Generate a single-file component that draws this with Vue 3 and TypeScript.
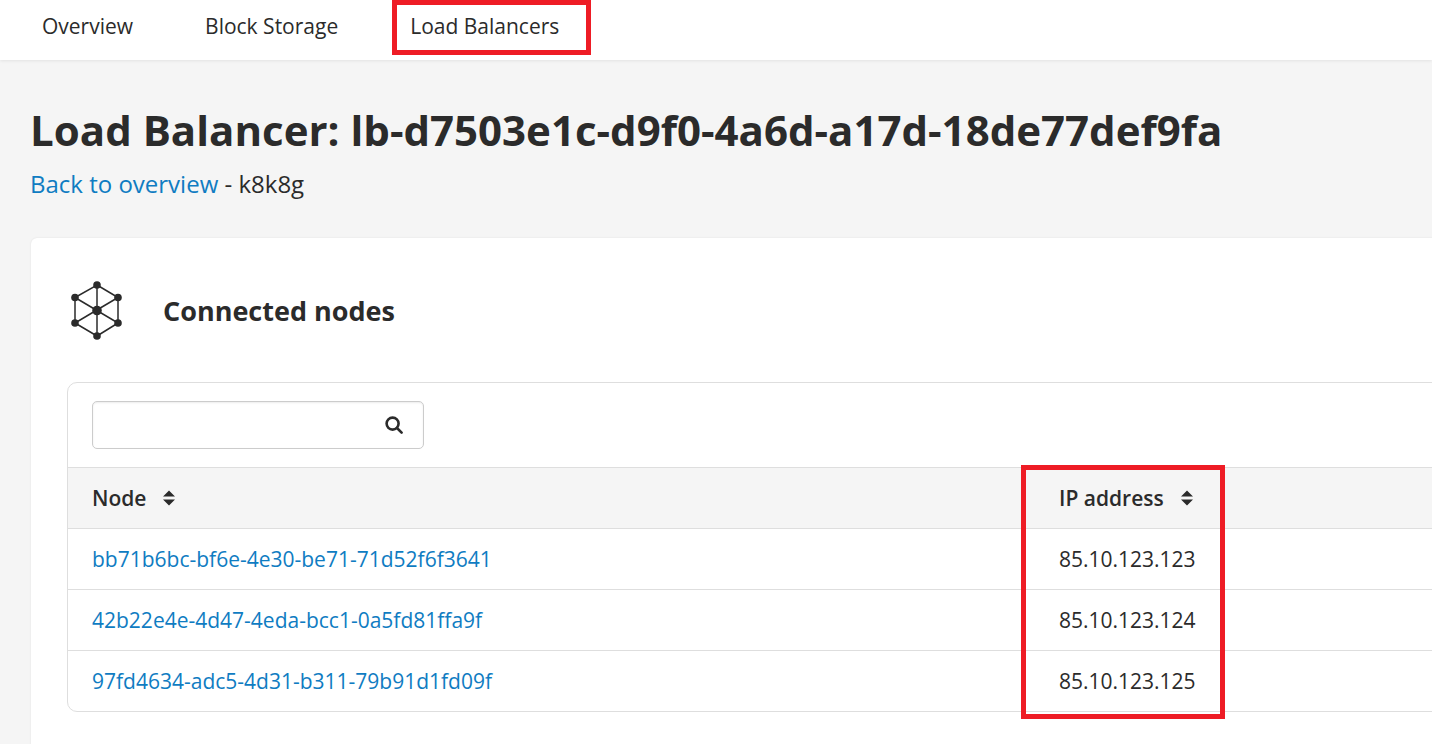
<script setup lang="ts">
const tabs: string[] = ['Overview', 'Block Storage', 'Load Balancers']
const rows = [
  { id: 'bb71b6bc-bf6e-4e30-be71-71d52f6f3641', ip: '85.10.123.123' },
  { id: '42b22e4e-4d47-4eda-bcc1-0a5fd81ffa9f', ip: '85.10.123.124' },
  { id: '97fd4634-adc5-4d31-b311-79b91d1fd09f', ip: '85.10.123.125' },
]
const nodes: [number, number][] = [[97, 285], [118, 297.5], [118, 323], [97, 336], [75, 323], [75, 297.5]]
</script>

<template>
  <div class="page">
    <nav class="nav">
      <a v-for="t in tabs" :key="t" class="tab">{{ t }}</a>
    </nav>
    <main class="main">
      <h1 class="title">Load Balancer: lb-d7503e1c-d9f0-4a6d-a17d-18de77def9fa</h1>
      <p class="sub"><a class="link">Back to overview</a> - k8k8g</p>
      <section class="card">
        <header class="card-head">
          <svg class="cube" width="54" height="60" viewBox="70 281 54 60">
            <g stroke="#2b2b2b" stroke-width="1.5" fill="none">
              <polygon points="97,285 118,297.5 118,323 97,336 75,323 75,297.5" />
              <line x1="97" y1="285" x2="97" y2="336" />
              <line x1="75" y1="297.5" x2="118" y2="323" />
              <line x1="118" y1="297.5" x2="75" y2="323" />
            </g>
            <circle v-for="(n, i) in nodes" :key="i" :cx="n[0]" :cy="n[1]" r="3.8" fill="#2b2b2b" />
            <circle cx="97" cy="310.5" r="4.8" fill="#2b2b2b" />
          </svg>
          <h2 class="card-title">Connected nodes</h2>
        </header>
        <div class="table-box">
          <div class="toolbar">
            <div class="search">
              <svg width="18" height="18" viewBox="0 0 18 18" fill="none" stroke="#2b2b2b" stroke-width="2.6">
                <circle cx="7.6" cy="7.6" r="6" />
                <line x1="12" y1="12" x2="16.6" y2="16.6" stroke-linecap="round" />
              </svg>
            </div>
          </div>
          <div class="row head">
            <div class="cell node">Node
              <svg class="sort" width="12" height="16" viewBox="0 0 12 16" fill="#2b2b2b"><path d="M6 0.5 12 6.6H0Z M0 9.4H12L6 15.5Z" /></svg>
            </div>
            <div class="cell ip">IP address
              <svg class="sort" width="12" height="16" viewBox="0 0 12 16" fill="#2b2b2b"><path d="M6 0.5 12 6.6H0Z M0 9.4H12L6 15.5Z" /></svg>
            </div>
          </div>
          <div v-for="r in rows" :key="r.id" class="row">
            <div class="cell node"><a class="link">{{ r.id }}</a></div>
            <div class="cell ip">{{ r.ip }}</div>
          </div>
        </div>
      </section>
    </main>
    <div class="mark mark-tab"></div>
    <div class="mark mark-col"></div>
  </div>
</template>

<style>
html, body { margin: 0; background: #f5f5f5; overflow: hidden; }
</style>

<style scoped>
.page {
  position: relative;
  width: 1432px;
  height: 744px;
  overflow: hidden;
  background: #f5f5f5;
  color: #2b2b2b;
  font-family: "Open Sans", sans-serif;
}
.nav {
  height: 60px;
  box-sizing: border-box;
  padding-left: 42px;
  display: flex;
  align-items: center;
  gap: 72px;
  background: #fff;
  box-shadow: 0 1px 3px rgba(0, 0, 0, 0.08);
  font-size: 21px;
  padding-bottom: 8px;
}
.main { padding: 0 0 0 30px; }
.title {
  margin: 41px 0 0;
  font-size: 42px;
  line-height: 58px;
  font-weight: 700;
  white-space: nowrap;
  letter-spacing: 0.01px;
}
.sub { margin: 0; font-size: 24px; line-height: 36px; padding-top: 7px; }
.link { color: #0f7cc2; text-decoration: none; }
.card {
  margin: 36px 0 0 1px;
  width: 1500px;
  height: 600px;
  box-sizing: border-box;
  background: #fff;
  border-radius: 6px;
  box-shadow: 0 0 2px rgba(0, 0, 0, 0.1);
  padding: 43px 0 0 36px;
}
.card-head { display: flex; align-items: center; height: 60px; padding-left: 3px; }
.card-title { margin: 0 0 2px 39px; font-size: 27px; font-weight: 700; }
.table-box {
  margin-top: 41px;
  border: 1px solid #dedede;
  border-radius: 10px;
  height: 330px;
  box-sizing: border-box;
  font-size: 21px;
}
.toolbar { height: 84px; box-sizing: border-box; padding: 18px 0 0 24px; }
.search {
  width: 332px;
  height: 48px;
  box-sizing: border-box;
  border: 1px solid #ccc;
  border-radius: 5px;
  display: flex;
  align-items: center;
  justify-content: flex-end;
  padding-right: 20px;
  box-shadow: inset 0 1px 2px rgba(0, 0, 0, 0.08);
}
.row {
  display: flex;
  height: 61px;
  box-sizing: border-box;
  align-items: center;
  border-top: 1px solid #dedede;
}
.head { background: #f5f5f5; font-weight: 600; font-size: 21px; }
.cell { padding-left: 24px; box-sizing: border-box; display: flex; align-items: center; }
.node { width: 967px; }
.sort { margin-left: 17px; }
.mark {
  position: absolute;
  box-sizing: border-box;
  border: 5px solid #ee1c25;
}
.mark-tab { left: 392px; top: 0; width: 199px; height: 55px; }
.mark-col { left: 1021px; top: 465px; width: 204px; height: 254px; }
</style>
